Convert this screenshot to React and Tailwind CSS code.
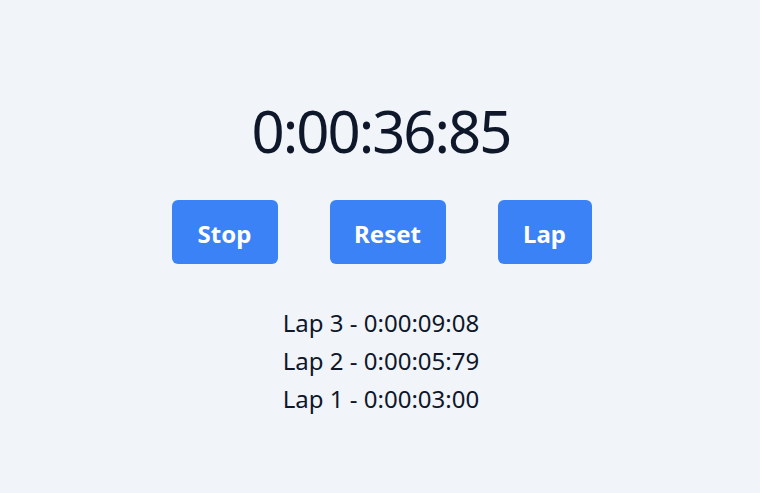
import React, { useState } from 'react';

const laps = ['0:00:09:08', '0:00:05:79', '0:00:03:00'];

export default function App() {
  const [running] = useState(true);

  return (
    <div
      className="min-h-[493px] bg-[#f1f5f9] text-[#0f172a] flex flex-col items-center pt-[101px]"
      style={{ fontFamily: '"Noto Sans", "Open Sans", sans-serif' }}
    >
      <div className="text-[58px] leading-[60px] tracking-[-2px] pl-[2px]">0:00:36:85</div>

      <div className="flex gap-[52px] mt-[39px] pl-[3px]">
        <button className="h-16 w-[106px] pt-[3px] rounded-md bg-[#3b82f6] text-white text-2xl font-bold">
          {running ? 'Stop' : 'Start'}
        </button>
        <button className="h-16 w-[116px] pt-[3px] rounded-md bg-[#3b82f6] text-white text-2xl font-bold">Reset</button>
        <button className="h-16 w-[94px] pt-[3px] rounded-md bg-[#3b82f6] text-white text-2xl font-bold">Lap</button>
      </div>

      <ul className="mt-[40px] text-center text-2xl leading-[38px] pl-[2px]">
        {laps.map((t, i) => (
          <li key={i}>
            Lap {laps.length - i} - {t}
          </li>
        ))}
      </ul>
    </div>
  );
}
